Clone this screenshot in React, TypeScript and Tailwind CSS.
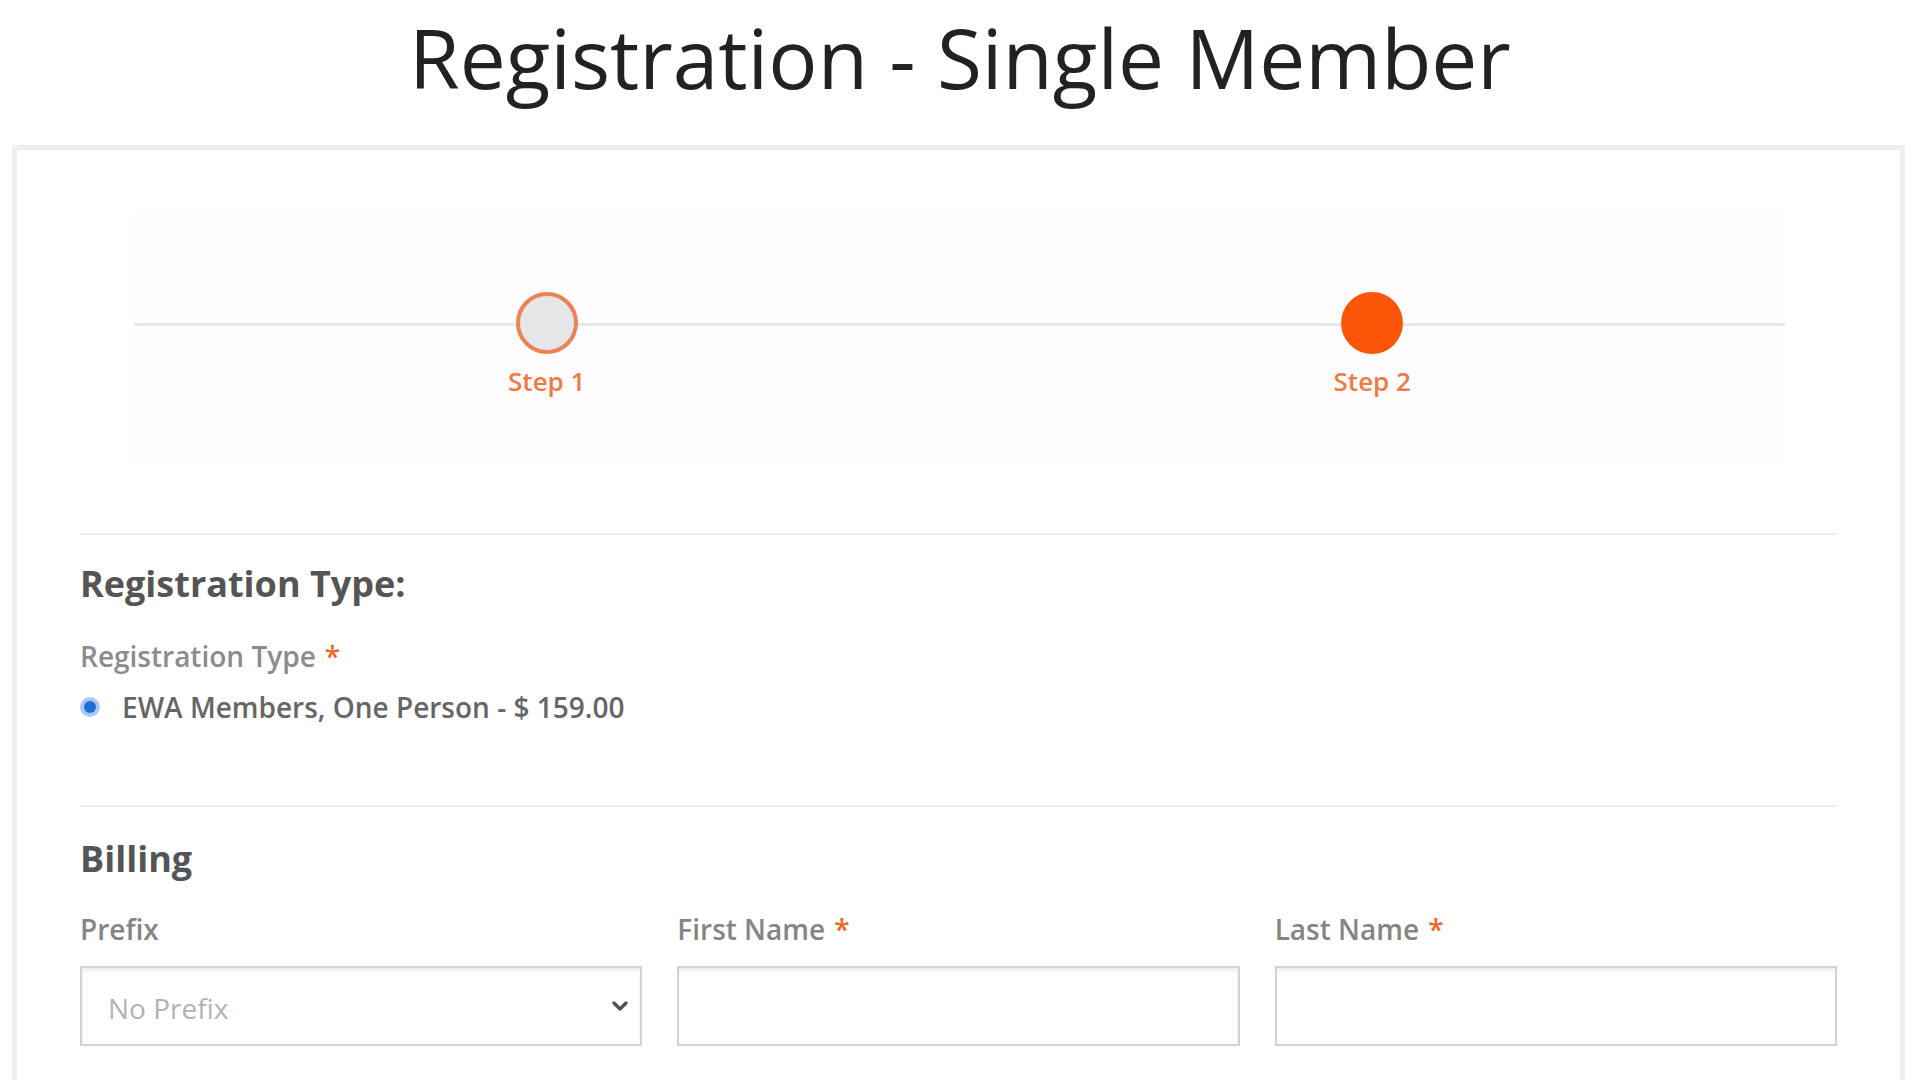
import React from "react";

function Step({ label, active }: { label: string; active: boolean }) {
  return (
    <div className="flex flex-col items-center">
      <div className="flex w-full items-center">
        <div className="mt-[3px] h-[3px] flex-1 bg-[#e8e8e8]" />
        {active ? (
          <div className="h-[62px] w-[62px] rounded-full bg-[#fb5608]" />
        ) : (
          <div className="h-[62px] w-[62px] rounded-full border-[4px] border-[#ea8456] bg-[#e5e6e8]" />
        )}
        <div className="mt-[3px] h-[3px] flex-1 bg-[#e8e8e8]" />
      </div>
      <div className="mt-[8px] text-[26px] leading-[39px] font-semibold text-[#f07a45]">{label}</div>
    </div>
  );
}

function Field({ label, required, children }: { label: string; required?: boolean; children: React.ReactNode }) {
  return (
    <div className="flex flex-col">
      <div className="text-[28px] leading-[40px] font-semibold text-[#858585]">
        {label}
        {required && <span className="ml-[9px] text-[#f0662a]">*</span>}
      </div>
      <div className="mt-[17px]">{children}</div>
    </div>
  );
}

export default function App() {
  return (
    <div className="min-h-screen bg-white font-['Open_Sans',sans-serif]">
      <h1 className="pt-[16px] text-center text-[82px] leading-none font-normal text-[#222222]">
        Registration - Single Member
      </h1>
      <div className="ml-[12px] mr-[15px] mt-[47px] border-[5px] border-[#eeeeee] px-[63px] pt-[62px] pb-[60px]">
        <div className="ml-[54px] mr-[52px] h-[252px] bg-[#fffdfd] pt-[80px]">
          <div className="grid grid-cols-2">
            <Step label="Step 1" active={false} />
            <Step label="Step 2" active={true} />
          </div>
        </div>

        <div className="mt-[69px] h-[2px] bg-[#ececec]" />

        <h2 className="mt-[31px] text-[36px] leading-none font-bold text-[#555555]">Registration Type:</h2>
        <div className="mt-[34px] text-[28px] leading-[40px] font-semibold text-[#8c8c8c]">
          Registration Type<span className="ml-[9px] text-[#f0662a]">*</span>
        </div>
        <label className="mt-[11px] flex items-center">
          <span className="flex h-[20px] w-[20px] items-center justify-center rounded-full bg-[#a9c8f3]">
            <span className="h-[12px] w-[12px] rounded-full bg-[#1f6bd8]" />
          </span>
          <span className="ml-[22px] text-[28px] leading-[40px] font-semibold text-[#666666]">
            EWA Members, One Person - $ 159.00
          </span>
        </label>

        <div className="mt-[78px] h-[2px] bg-[#ececec]" />

        <h2 className="mt-[34px] text-[36px] leading-none font-bold text-[#555555]">Billing</h2>
        <div className="mt-[32px] grid grid-cols-3 gap-x-[35px]">
          <Field label="Prefix">
            <div className="flex h-[80px] items-center justify-between border-2 border-[#d2d2d2] bg-white pl-[26px] pr-[10px] shadow-[inset_0_3px_3px_rgba(0,0,0,0.07)]">
              <span className="mt-[4px] text-[28px] text-[#b3b3b3]">No Prefix</span>
              <svg width="20" height="14" viewBox="0 0 20 14" fill="none">
                <path d="M4 4 L10 10 L16 4" stroke="#555" strokeWidth="3.5" strokeLinecap="round" strokeLinejoin="round" />
              </svg>
            </div>
          </Field>
          <Field label="First Name" required>
            <div className="h-[80px] border-2 border-[#d2d2d2] bg-white shadow-[inset_0_3px_3px_rgba(0,0,0,0.07)]" />
          </Field>
          <Field label="Last Name" required>
            <div className="h-[80px] border-2 border-[#d2d2d2] bg-white shadow-[inset_0_3px_3px_rgba(0,0,0,0.07)]" />
          </Field>
        </div>
      </div>
    </div>
  );
}
